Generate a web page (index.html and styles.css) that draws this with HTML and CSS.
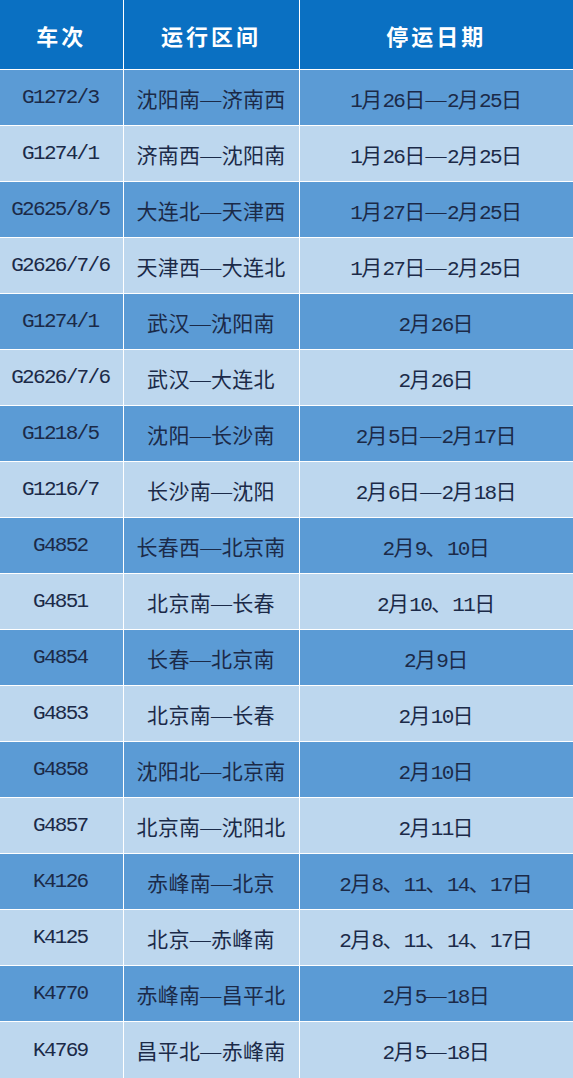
FILE: index.html
```html
<!DOCTYPE html>
<html lang="zh-CN">
<head>
<meta charset="utf-8">
<link rel="stylesheet" href="styles.css">
</head>
<body>
<table class="tbl">
<colgroup><col class="c1"><col class="c2"><col class="c3"></colgroup>
<thead>
<tr><th>车次</th><th>运行区间</th><th>停运日期</th></tr>
</thead>
<tbody>
<tr class="dk"><td class="no">G1272/3</td><td>沈阳南—济南西</td><td><span class="d">1</span>月<span class="d">26</span>日—<span class="d">2</span>月<span class="d">25</span>日</td></tr>
<tr class="lt"><td class="no">G1274/1</td><td>济南西—沈阳南</td><td><span class="d">1</span>月<span class="d">26</span>日—<span class="d">2</span>月<span class="d">25</span>日</td></tr>
<tr class="dk"><td class="no">G2625/8/5</td><td>大连北—天津西</td><td><span class="d">1</span>月<span class="d">27</span>日—<span class="d">2</span>月<span class="d">25</span>日</td></tr>
<tr class="lt"><td class="no">G2626/7/6</td><td>天津西—大连北</td><td><span class="d">1</span>月<span class="d">27</span>日—<span class="d">2</span>月<span class="d">25</span>日</td></tr>
<tr class="dk"><td class="no">G1274/1</td><td>武汉—沈阳南</td><td><span class="d">2</span>月<span class="d">26</span>日</td></tr>
<tr class="lt"><td class="no">G2626/7/6</td><td>武汉—大连北</td><td><span class="d">2</span>月<span class="d">26</span>日</td></tr>
<tr class="dk"><td class="no">G1218/5</td><td>沈阳—长沙南</td><td><span class="d">2</span>月<span class="d">5</span>日—<span class="d">2</span>月<span class="d">17</span>日</td></tr>
<tr class="lt"><td class="no">G1216/7</td><td>长沙南—沈阳</td><td><span class="d">2</span>月<span class="d">6</span>日—<span class="d">2</span>月<span class="d">18</span>日</td></tr>
<tr class="dk"><td class="no">G4852</td><td>长春西—北京南</td><td><span class="d">2</span>月<span class="d">9</span>、<span class="d">10</span>日</td></tr>
<tr class="lt"><td class="no">G4851</td><td>北京南—长春</td><td><span class="d">2</span>月<span class="d">10</span>、<span class="d">11</span>日</td></tr>
<tr class="dk"><td class="no">G4854</td><td>长春—北京南</td><td><span class="d">2</span>月<span class="d">9</span>日</td></tr>
<tr class="lt"><td class="no">G4853</td><td>北京南—长春</td><td><span class="d">2</span>月<span class="d">10</span>日</td></tr>
<tr class="dk"><td class="no">G4858</td><td>沈阳北—北京南</td><td><span class="d">2</span>月<span class="d">10</span>日</td></tr>
<tr class="lt"><td class="no">G4857</td><td>北京南—沈阳北</td><td><span class="d">2</span>月<span class="d">11</span>日</td></tr>
<tr class="dk"><td class="no">K4126</td><td>赤峰南—北京</td><td><span class="d">2</span>月<span class="d">8</span>、<span class="d">11</span>、<span class="d">14</span>、<span class="d">17</span>日</td></tr>
<tr class="lt"><td class="no">K4125</td><td>北京—赤峰南</td><td><span class="d">2</span>月<span class="d">8</span>、<span class="d">11</span>、<span class="d">14</span>、<span class="d">17</span>日</td></tr>
<tr class="dk"><td class="no">K4770</td><td>赤峰南—昌平北</td><td><span class="d">2</span>月<span class="d">5</span>—<span class="d">18</span>日</td></tr>
<tr class="lt last"><td class="no">K4769</td><td>昌平北—赤峰南</td><td><span class="d">2</span>月<span class="d">5</span>—<span class="d">18</span>日</td></tr>
</tbody>
</table>
</body>
</html>
```
FILE: styles.css
```css
html, body {
  margin: 0;
  padding: 0;
  background: #ffffff;
}
.tbl {
  width: 573px;
  border-collapse: collapse;
  table-layout: fixed;
  font-family: "Liberation Serif", "Noto Sans CJK SC", serif;
}
.c1 { width: 123px; }
.c2 { width: 176px; }
.c3 { width: 274px; }
.tbl th, .tbl td {
  border: 1px solid #ffffff;
  text-align: center;
  vertical-align: middle;
  padding: 0;
}
.tbl tr:first-child th { border-top: none; }
.tbl th:first-child, .tbl td:first-child { border-left: none; }
.tbl th:last-child, .tbl td:last-child { border-right: none; }
.tbl tbody tr:last-child td { border-bottom: none; }
.tbl th {
  height: 69px;
  background: #0a70c2;
  color: #ffffff;
  font-family: "Noto Sans CJK SC", sans-serif;
  font-weight: 700;
  font-size: 22px;
  letter-spacing: 3px;
}
.tbl td {
  height: 55px;
  color: #1b2a48;
  font-size: 21px;
  letter-spacing: 0.3px;
  white-space: nowrap;
}
.tbl td.no,
.tbl td .d {
  font-family: "Liberation Mono", monospace;
  font-size: 21px;
  letter-spacing: -1.7px;
}
.tbl td.no { padding-right: 2px; }
.tbl tr.last td { height: 56px; }
.dk td { background: #5b9bd5; }
.lt td { background: #bdd7ee; }
```
